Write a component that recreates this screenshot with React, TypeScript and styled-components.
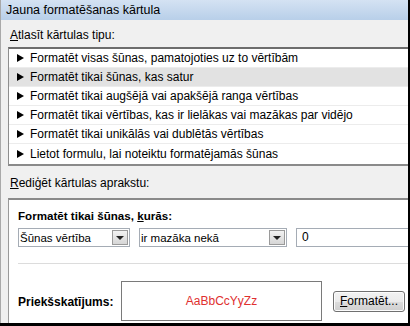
import React from "react";
import styled, { createGlobalStyle } from "styled-components";

const Global = createGlobalStyle`
  html, body { margin: 0; padding: 0; background: #f0f0f0; }
  body { font-family: Tahoma, "Liberation Sans", Arial, sans-serif; font-size: 12px; color: #000; }
  * { box-sizing: border-box; }
`;

const Frame = styled.div`
  width: 410px;
  height: 326px;
  overflow: hidden;
  background: #000;
  padding: 0 2px 3px 0;
`;

const Dialog = styled.div`
  width: 408px;
  height: 323px;
  background: #f0f0f0;
  border-left: 1px solid #a9a9a9;
  display: flex;
  flex-direction: column;
  overflow: hidden;
`;

const TitleBar = styled.div`
  height: 20px;
  flex: none;
  background: linear-gradient(#d4e2f3, #b8cfe9);
  padding: 3px 0 0 5px;
  font-size: 12.5px;
  line-height: 15px;
`;

const Body = styled.div`
  flex: 1;
  display: flex;
  flex-direction: column;
  padding: 0 0 0 7px;
`;

const Label = styled.div<{ $top: number; $bottom: number }>`
  padding: ${(p) => p.$top}px 0 0 2px;
  height: ${(p) => p.$top + p.$bottom + 13}px;
  line-height: 13px;
  & u { text-decoration: underline; }
`;

const ListBox = styled.div`
  margin-right: -10px;
  border-top: 2px solid #6d6d6d;
  border-left: 1px solid #8e8e8e;
  border-bottom: 2px solid #8a8a8a;
  background: #fff;
  padding-bottom: 1px;
  display: flex;
  flex-direction: column;
`;

const Row = styled.div<{ $selected?: boolean }>`
  height: 19px;
  line-height: 18px;
  padding-left: 8px;
  border-bottom: 1px solid #ececec;
  background: ${(p) => (p.$selected ? "#e2e2e2" : "#fff")};
  display: flex;
  align-items: center;
  gap: 5px;
  white-space: nowrap;
  &:last-child { border-bottom: none; }
`;

const Arrow = styled.span`
  width: 0;
  height: 0;
  border-top: 4px solid transparent;
  border-bottom: 4px solid transparent;
  border-left: 7px solid #000;
  margin-right: 1px;
`;

const EditBox = styled.div`
  flex: 1;
  margin-right: -10px;
  border-top: 2px solid #8a8a8a;
  border-left: 1px solid #9a9a9a;
  background: #fff;
  padding: 8px 0 0 9px;
  display: flex;
  flex-direction: column;
`;

const Bold = styled.div`
  font-weight: bold;
  font-size: 11.6px;
  height: 19px;
  line-height: 14px;
  padding-top: 1px;
  & u { text-decoration: underline; }
`;

const Controls = styled.div`
  display: flex;
  gap: 9px;
  height: 19px;
  margin-top: 1px;
`;

const Select = styled.div<{ $w: number }>`
  width: ${(p) => p.$w}px;
  height: 19px;
  border: 1px solid #a5acb5;
  display: flex;
  align-items: center;
  padding: 1px;
  background: #fff;
`;

const SelectText = styled.span`
  flex: 1;
  padding-left: 0;
  font-size: 11.5px;
  white-space: nowrap;
  overflow: hidden;
`;

const DropBtn = styled.span`
  width: 16px;
  height: 15px;
  border: 1px solid #9a9a9a;
  background: linear-gradient(#f2f2f2, #d6d6d6);
  display: flex;
  align-items: center;
  justify-content: center;
  &::after {
    content: "";
    border-left: 4px solid transparent;
    border-right: 4px solid transparent;
    border-top: 4px solid #222;
    margin-top: 1px;
  }
`;

const Input = styled.div`
  flex: 1;
  height: 19px;
  border: 1px solid #a5acb5;
  padding: 2px 0 0 5px;
  line-height: 13px;
`;

const Divider = styled.div`
  height: 1px;
  background: #dcdcdc;
  margin: 16px 0 0 0;
`;

const PreviewRow = styled.div`
  display: flex;
  align-items: center;
  margin-top: 17px;
`;

const PreviewLabel = styled.div`
  width: 103px;
  font-weight: bold;
  font-size: 12px;
  padding-top: 2px;
`;

const PreviewBox = styled.div`
  width: 201px;
  height: 40px;
  border: 1px solid #7a7a7a;
  display: flex;
  align-items: center;
  justify-content: center;
  color: #e0302f;
  font-size: 12px;
`;

const Button = styled.div`
  margin-left: 11px;
  width: 72px;
  height: 21px;
  border: 1px solid #707070;
  border-radius: 3px;
  background: linear-gradient(#f2f2f2 0%, #ebebeb 50%, #dddddd 51%, #cfcfcf 100%);
  box-shadow: inset 0 0 0 1px #fcfcfc;
  display: flex;
  align-items: center;
  justify-content: center;
  & u { text-decoration: underline; }
`;

const items = [
  "Formatēt visas šūnas, pamatojoties uz to vērtībām",
  "Formatēt tikai šūnas, kas satur",
  "Formatēt tikai augšējā vai apakšējā ranga vērtības",
  "Formatēt tikai vērtības, kas ir lielākas vai mazākas par vidējo",
  "Formatēt tikai unikālās vai dublētās vērtības",
  "Lietot formulu, lai noteiktu formatējamās šūnas",
];

export default function App() {
  return (
    <>
      <Global />
      <Frame>
        <Dialog>
          <TitleBar>Jauna formatēšanas kārtula</TitleBar>
          <Body>
            <Label $top={9} $bottom={5}>
              <u>A</u>tlasīt kārtulas tipu:
            </Label>
            <ListBox>
              {items.map((t, i) => (
                <Row key={i} $selected={i === 1}>
                  <Arrow />
                  {t}
                </Row>
              ))}
            </ListBox>
            <Label $top={11} $bottom={8}>
              <u>R</u>ediģēt kārtulas aprakstu:
            </Label>
            <EditBox>
              <Bold>
                Formatēt tikai šūnas, <u>k</u>urās:
              </Bold>
              <Controls>
                <Select $w={112}>
                  <SelectText>Šūnas vērtība</SelectText>
                  <DropBtn />
                </Select>
                <Select $w={148}>
                  <SelectText>ir mazāka nekā</SelectText>
                  <DropBtn />
                </Select>
                <Input>0</Input>
              </Controls>
              <Divider />
              <PreviewRow>
                <PreviewLabel>Priekšskatījums:</PreviewLabel>
                <PreviewBox>AaBbCcYyZz</PreviewBox>
                <Button>
                  <u>F</u>ormatēt...
                </Button>
              </PreviewRow>
            </EditBox>
          </Body>
        </Dialog>
      </Frame>
    </>
  );
}
